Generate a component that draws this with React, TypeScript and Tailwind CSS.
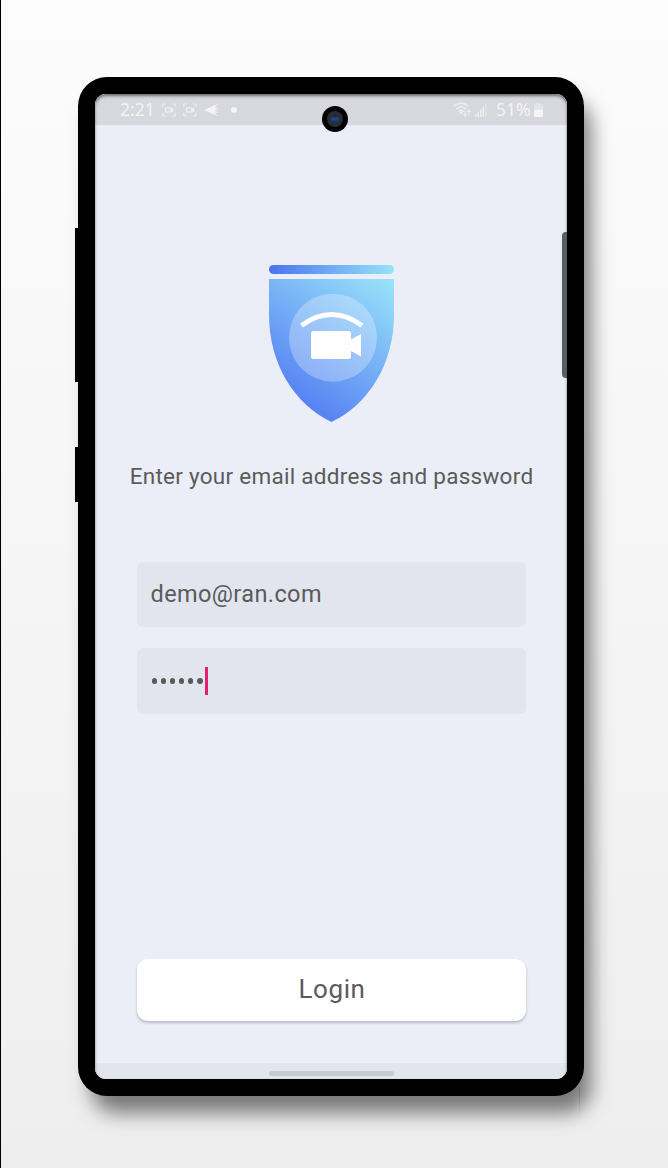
import React from "react";

function CaptureIcon() {
  return (
    <svg width="14" height="14" viewBox="0 0 14 14" fill="none" stroke="#f0f0f3" strokeWidth="1.200">
      <path d="M.8 4V2Q.8 1 2 1h1.500M10.500 1H12q1.200 0 1.200 1v2M13.200 10v2q0 1-1.200 1h-1.500M3.500 13H2Q.8 13 .8 12v-2" />
      <rect x="3.500" y="5" width="5.200" height="4" />
      <path d="M8.700 6.500l2-1.200v3.400l-2-1.200" />
    </svg>
  );
}

function StatusBar() {
  return (
    <div className="flex h-[31px] w-full shrink-0 items-center bg-[#d7d8dd] pl-[25px] font-['Noto_Sans',sans-serif] text-[17px] leading-[31px] text-[#f3f3f5]">
      <span className="w-[42px] text-[17.500px]">2:21</span>
      <CaptureIcon />
      <span className="w-[7px]" />
      <CaptureIcon />
      <svg className="ml-[7px]" width="16" height="14" viewBox="0 0 16 14" fill="#f3f3f5">
        <path d="M0 7L14.500 .5 10.500 4.800 15 4.600 10.500 6.500 15.500 7 10.500 7.700 15 9.600 10.500 9.400 14.500 13.500z" />
      </svg>
      <span className="ml-[11px] size-[6px] rounded-full bg-[#f6f6f8]" />
      <svg className="ml-[216px]" width="19" height="15" viewBox="0 0 19 15" fill="none" stroke="#eeeef1" strokeWidth="1.500">
        <path d="M.8 4.200c4-4 10.500-4 14.500 0M3.200 7c3-2.800 6.700-2.800 9.700 0M5.500 9.500c1.700-1.500 3.300-1.500 5 0" />
        <path d="M12 9v5m-1.700-1.800L12 14l1.700-1.800M16 13V8m-1.700 1.800L16 8l1.700 1.800" strokeWidth="1.100" />
        <circle cx="8" cy="11" r=".7" />
      </svg>
      <svg className="ml-[3px]" width="12" height="14" viewBox="0 0 12 14" fill="#eeeef1">
        <path d="M0 11h1.500v3H0zM2.500 9H4v5H2.500zM5 6.500h1.500V14H5zM7.500 4H9v10H7.500z" />
        <path d="M10 1h1.500v13H10z" opacity=".5" />
      </svg>
      <span className="ml-[9px] w-[37px] text-[17.500px]">51%</span>
      <svg className="ml-[1px]" width="9" height="14" viewBox="0 0 9 14">
        <path d="M2.500 0h4v1.500H9V7H0V1.500h2.500z" fill="#e4e5e8" />
        <path d="M0 7h9v5.500Q9 14 8 14H1Q0 14 0 12.500z" fill="#f5f5f7" />
      </svg>
    </div>
  );
}

function ShieldLogo() {
  return (
    <svg width="126" height="158" viewBox="0 0 126 158">
      <defs>
        <linearGradient id="bar" x1="0" x2="1" y1="0" y2="0">
          <stop offset="0" stopColor="#4a73ee" />
          <stop offset="1" stopColor="#97e3f9" />
        </linearGradient>
        <linearGradient id="shield" gradientUnits="userSpaceOnUse" x1="28" y1="140" x2="121" y2="13">
          <stop offset="0" stopColor="#557ff3" />
          <stop offset="1" stopColor="#99e4fa" />
        </linearGradient>
      </defs>
      <rect x="0" y="0" width="125" height="9" rx="4.500" fill="url(#bar)" />
      <path d="M0 14H125V50C125 99 99 140 62.500 157C26 140 0 99 0 50Z" fill="url(#shield)" />
      <circle cx="64" cy="72.700" r="44" fill="#fff" fillOpacity=".28" />
      <path d="M32.500 60.500Q62.500 38.500 93 60.500" fill="none" stroke="#fff" strokeWidth="5" />
      <rect x="42" y="66" width="40" height="28" rx="2.500" fill="#fff" />
      <path d="M82 74.500L92 69v22.500L82 86z" fill="#fff" />
    </svg>
  );
}

export default function App() {
  return (
    <main className="flex h-[1168px] w-[668px] justify-center overflow-hidden border-l border-black bg-linear-to-b from-[#fcfcfc] to-[#eeeeee] pr-[7px] pt-[77px] font-[Roboto,sans-serif] text-[#5a5a5a]">
      <section className="relative h-[1019px] w-[506px] rounded-[29px] bg-black p-[17px] shadow-[10px_20px_20px_-3px_rgba(0,0,0,0.500)]">
        <div className="absolute -left-[3px] top-[151px] h-[154px] w-[4px] bg-black" />
        <div className="absolute -left-[3px] top-[370px] h-[55px] w-[4px] bg-black" />
        <div className="absolute left-[501px] top-[1010px] h-[34px] w-px bg-linear-to-b from-black/15 to-transparent" />
        <div className="relative flex h-[985px] flex-col items-center overflow-hidden rounded-[11px] bg-[#ebeef7]">
          <StatusBar />
          <div className="mt-[140px] pl-[2px]">
            <ShieldLogo />
          </div>
          <p className="mt-[37px] whitespace-nowrap pl-[1px] text-[22.500px] leading-[32px] tracking-[0.270px]">Enter your email address and password</p>
          <div className="mt-[70px] flex w-[389px] flex-col gap-[21px]">
            <div className="flex h-[65px] items-center rounded-[6px] bg-[#e2e5ed] pl-[14px] pt-[1px] text-[23.500px] tracking-[0.400px]">demo@ran.com</div>
            <div className="flex h-[66px] items-center rounded-[6px] bg-[#e2e5ed] pl-[15px]">
              <div className="flex gap-[4px]">
                {[0, 1, 2, 3, 4, 5].map((i) => (
                  <span key={i} className="size-[5.200px] rounded-full bg-[#5a5a5a]" />
                ))}
              </div>
              <span className="ml-[2px] h-[28px] w-[3px] bg-[#e02070]" />
            </div>
          </div>
          <button className="mt-[245px] h-[62px] w-[389px] rounded-[11px] bg-white pb-[2px] pl-[2px] text-[26px] tracking-[0.600px] shadow-[0_2px_3px_rgba(0,0,0,0.220)]">Login</button>
          <div className="mt-auto flex h-[16px] w-full shrink-0 items-center justify-center bg-[#e2e5ed] pt-[4px]">
            <span className="h-[5px] w-[125px] rounded-full bg-[#c8cad1]" />
          </div>
          <div className="pointer-events-none absolute inset-0 rounded-[11px] shadow-[inset_0_2px_3px_rgba(0,0,0,0.500)]" />
          <div className="absolute right-0 top-[138px] h-[146px] w-[5px] rounded-l-[4px] bg-[#585e61]" />
        </div>
        <div className="absolute left-[244px] top-[29px] flex size-[26px] items-center justify-center rounded-full bg-black">
          <span className="flex size-[16px] items-center justify-center rounded-full bg-[#2c2d30]">
            <span className="size-[8px] rounded-full bg-linear-to-b from-[#0b2042] via-[#244b83] to-[#0c2d68]" />
          </span>
        </div>
      </section>
    </main>
  );
}
